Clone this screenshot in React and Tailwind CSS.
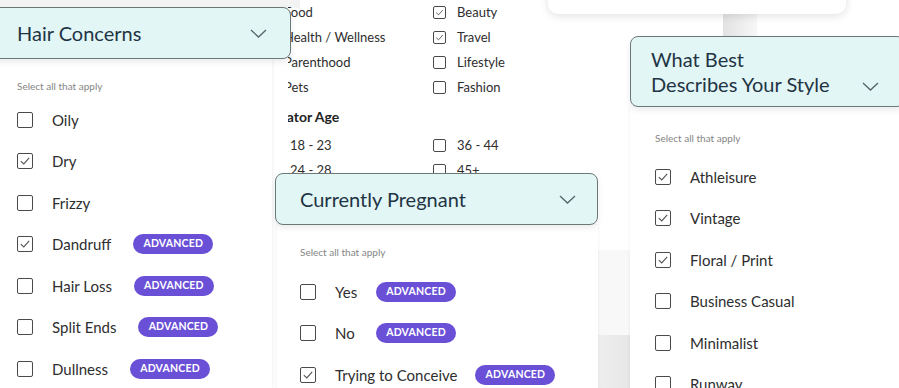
import React from "react";

const hairRows = [
  { label: "Oily", checked: false },
  { label: "Dry", checked: true },
  { label: "Frizzy", checked: false },
  { label: "Dandruff", checked: true, advanced: true },
  { label: "Hair Loss", checked: false, advanced: true },
  { label: "Split Ends", checked: false, advanced: true },
  { label: "Dullness", checked: false, advanced: true },
];

const pregnantRows = [
  { label: "Yes", checked: false, advanced: true },
  { label: "No", checked: false, advanced: true },
  { label: "Trying to Conceive", checked: true, advanced: true },
];

const styleRows = [
  { label: "Athleisure", checked: true },
  { label: "Vintage", checked: true },
  { label: "Floral / Print", checked: true },
  { label: "Business Casual", checked: false },
  { label: "Minimalist", checked: false },
  { label: "Runway", checked: false },
];

const categoryRows = [
  ["Food", false, "Beauty", true],
  ["Health / Wellness", false, "Travel", true],
  ["Parenthood", false, "Lifestyle", false],
  ["Pets", false, "Fashion", false],
];

const ageRows = [
  ["18 - 23", false, "36 - 44", false],
  ["24 - 28", false, "45+", false],
];

function Checkbox({ checked, small }) {
  return (
    <span
      className={
        small
          ? "flex h-[13px] w-[13px] shrink-0 items-center justify-center rounded-[2px] border-[1.5px] border-[#4a4a4a] bg-white"
          : "flex h-4 w-4 shrink-0 items-center justify-center rounded-[2px] border-[1.5px] border-[#4a4a4a] bg-white"
      }
    >
      {checked && (
        <svg viewBox="0 0 16 16" className="h-full w-full">
          <path d="M3.2 8.2 L6.6 11.4 L12.8 4.4" fill="none" stroke="#555" strokeWidth="1.3" />
        </svg>
      )}
    </span>
  );
}

function Chevron() {
  return (
    <svg width="17" height="9" viewBox="0 0 17 9" className="shrink-0">
      <path d="M1 1 L8.5 8 L16 1" fill="none" stroke="#58626b" strokeWidth="1.3" />
    </svg>
  );
}

function Badge() {
  return (
    <span className="flex h-5 w-[80px] shrink-0 items-center justify-center rounded-full bg-[#6a50d6] text-[10.5px] font-bold tracking-[0.2px] text-white">
      ADVANCED
    </span>
  );
}

function OptionRow({ row, labelClass = "", gap = "ml-[22px]" }) {
  return (
    <div className="flex h-[41.5px] items-center">
      <Checkbox checked={row.checked} />
      <span className={`ml-[19px] text-[15px] text-[#2e2e2e] ${labelClass}`}>{row.label}</span>
      {row.advanced && (
        <span className={gap}>
          <Badge />
        </span>
      )}
    </div>
  );
}

function SelectHint() {
  return <p className="h-[14px] text-[10px] leading-[14px] text-[#858585]">Select all that apply</p>;
}

function MiniRow({ label, checked, shift }) {
  return (
    <div className="flex h-[25px] items-center">
      <Checkbox checked={checked} small />
      <span className={shift ? "ml-[17px] text-[13px] text-[#2e2e2e]" : "ml-[11px] text-[13px] text-[#2e2e2e]"}>
        {label}
      </span>
    </div>
  );
}

export default function App() {
  return (
    <div className="relative h-[388px] w-[899px] overflow-hidden bg-white font-['Lato','Noto_Sans',sans-serif]">
      {/* background bits */}
      <div className="absolute left-0 top-0 h-[8px] w-[300px] bg-[#f3f3f3]" />
      <div className="absolute left-[723px] top-[14px] h-[22px] w-[34px] bg-gradient-to-r from-[#e2e2e2] to-[#f7f7f7]" />
      <div className="absolute left-[598px] top-[250px] h-[85px] w-[32px] bg-[#f8f8f8]" />
      <div className="absolute left-[598px] top-[335px] h-[53px] w-[32px] bg-gradient-to-r from-[#eeeeee] to-[#e7e7e7]" />

      {/* card behind: categories + creator age */}
      <div className="absolute left-[288px] top-0 h-[173px] w-[260px] overflow-hidden">
        <div className="-ml-[28px]">
          <div className="grid grid-cols-[173px_173px]">
            {categoryRows.map(([a, ac, b, bc]) => (
              <React.Fragment key={a}>
                <MiniRow label={a} checked={ac} />
                <MiniRow label={b} checked={bc} />
              </React.Fragment>
            ))}
          </div>
          <div className="flex h-[33px] items-center pl-[5px] text-[14px] font-bold text-[#222]">Creator Age</div>
          <div className="grid grid-cols-[173px_173px]">
            {ageRows.map(([a, ac, b, bc]) => (
              <React.Fragment key={a}>
                <MiniRow label={a} checked={ac} shift />
                <MiniRow label={b} checked={bc} />
              </React.Fragment>
            ))}
          </div>
        </div>
      </div>

      {/* top right card */}
      <div className="absolute left-[548px] top-[-20px] h-[34px] w-[298px] rounded-[10px] bg-white shadow-[0_2px_8px_rgba(0,0,0,0.12)]" />

      {/* Hair Concerns */}
      <div className="absolute left-[-10px] top-[7px] flex w-[301px] flex-col">
        <div className="relative z-10 flex h-[52px] items-center justify-between rounded-lg border border-[#6c7777] bg-[#e2f6f5] pl-[26px] pr-[23px] shadow-[0_3px_6px_rgba(0,0,0,0.08)]">
          <h2 className="text-[20px] text-[#1f3444]">Hair Concerns</h2>
          <Chevron />
        </div>
        <div className="h-[330px] w-[282px] bg-white pl-[27px] pt-[20px] shadow-[1px_0_3px_rgba(0,0,0,0.06)]">
          <SelectHint />
          <div className="mt-[6px] flex flex-col">
            {hairRows.map((r) => (
              <OptionRow key={r.label} row={r} />
            ))}
          </div>
        </div>
      </div>

      {/* Currently Pregnant */}
      <div className="absolute left-[275px] top-[173px] flex w-[323px] flex-col">
        <div className="relative z-10 flex h-[52px] items-center justify-between rounded-lg border border-[#6c7777] bg-[#e2f6f5] pl-[24px] pr-[21px] shadow-[0_3px_6px_rgba(0,0,0,0.08)]">
          <h2 className="text-[20px] text-[#1f3444]">Currently Pregnant</h2>
          <Chevron />
        </div>
        <div className="ml-[2px] h-[200px] bg-white pl-[23px] pt-[20px] shadow-[0_0_3px_rgba(0,0,0,0.08)]">
          <SelectHint />
          <div className="mt-[12px] flex flex-col">
            {pregnantRows.map((r) => (
              <OptionRow key={r.label} row={r} labelClass="min-w-[23px]" gap="ml-[18px]" />
            ))}
          </div>
        </div>
      </div>

      {/* What Best Describes Your Style */}
      <div className="absolute left-[630px] top-[36px] flex w-[275px] flex-col">
        <div className="relative z-10 flex h-[71px] justify-between rounded-lg border border-[#6c7777] bg-[#e2f6f5] pl-[20px] pr-[25px] shadow-[0_3px_6px_rgba(0,0,0,0.08)]">
          <h2 className="pt-[10px] text-[20px] leading-[25px] text-[#1f3444]">
            What Best
            <br />
            Describes Your Style
          </h2>
          <span className="mb-[15px] self-end">
            <Chevron />
          </span>
        </div>
        <div className="h-[290px] bg-white pl-[25px] pt-[24px] shadow-[0_0_3px_rgba(0,0,0,0.08)]">
          <SelectHint />
          <div className="mt-[11px] flex flex-col">
            {styleRows.map((r) => (
              <OptionRow key={r.label} row={r} />
            ))}
          </div>
        </div>
      </div>
    </div>
  );
}
